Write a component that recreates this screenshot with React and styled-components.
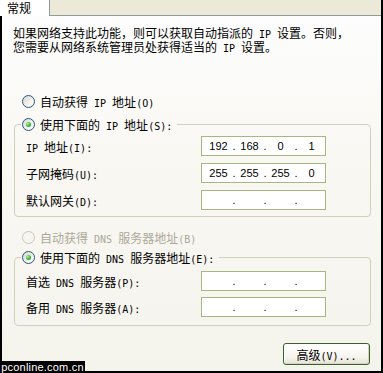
import styled, { createGlobalStyle } from 'styled-components'

const cjk = '"Noto Sans CJK SC", "Noto Sans CJK JP", sans-serif'

const GlobalStyle = createGlobalStyle`
	html, body {
		margin: 0;
		padding: 0;
		background: #fff;
	}
	body {
		font-family: ${cjk};
	}
`

// half-width runs (Latin, digits, brackets) get a narrow mono font like SimSun's
function Mixed({ text }) {
	const parts = text.split(/([\x20-\x7e]+)/)
	return parts.map((p, i) => (i % 2 ? <Half key={i}>{p}</Half> : p))
}

function Radio({ checked, disabled, text }) {
	return (
		<RadioRow $disabled={disabled}>
			<RadioDot $checked={checked} $disabled={disabled} />
			<span>
				<Mixed text={text} />
			</span>
		</RadioRow>
	)
}

function IpField({ value = ['', '', '', ''] }) {
	return (
		<IpBox>
			{value.map((v, i) => (
				<Seg key={i}>
					{i > 0 && <Dot>.</Dot>}
					<Num>{v}</Num>
				</Seg>
			))}
		</IpBox>
	)
}

export default function App() {
	return (
		<>
			<GlobalStyle />
			<Window>
				<TabStrip>
					<Tab>常规</Tab>
					<TabFill />
				</TabStrip>
				<Panel>
					<Desc>
						<Mixed text="如果网络支持此功能，则可以获取自动指派的 IP 设置。否则，" />
						<br />
						<Mixed text="您需要从网络系统管理员处获得适当的 IP 设置。" />
					</Desc>

					<TopRadio>
						<Radio text="自动获得 IP 地址(O)" />
					</TopRadio>

					<Group>
						<Legend>
							<Radio checked text="使用下面的 IP 地址(S):" />
						</Legend>
						<Rows $gap={7}>
							<FieldRow>
								<Label>
									<Mixed text="IP 地址(I):" />
								</Label>
								<IpField value={['192', '168', '0', '1']} />
							</FieldRow>
							<FieldRow>
								<Label>
									<Mixed text="子网掩码(U):" />
								</Label>
								<IpField value={['255', '255', '255', '0']} />
							</FieldRow>
							<FieldRow>
								<Label>
									<Mixed text="默认网关(D):" />
								</Label>
								<IpField />
							</FieldRow>
						</Rows>
					</Group>

					<MidRadio>
						<Radio disabled text="自动获得 DNS 服务器地址(B)" />
					</MidRadio>

					<Group $top={4} $bottom={8} $pad={6}>
						<Legend>
							<Radio checked text="使用下面的 DNS 服务器地址(E):" />
						</Legend>
						<Rows $gap={6}>
							<FieldRow>
								<Label>
									<Mixed text="首选 DNS 服务器(P):" />
								</Label>
								<IpField />
							</FieldRow>
							<FieldRow>
								<Label>
									<Mixed text="备用 DNS 服务器(A):" />
								</Label>
								<IpField />
							</FieldRow>
						</Rows>
					</Group>

					<Footer>
						<Button>
							<span>
								<Mixed text="高级(V)..." />
							</span>
						</Button>
					</Footer>
				</Panel>
				<Watermark>pconline.com.cn</Watermark>
			</Window>
		</>
	)
}

const Window = styled.div`
	position: relative;
	width: 383px;
	height: 373px;
	box-sizing: border-box;
	border-right: 2px solid #000;
	display: flex;
	flex-direction: column;
	overflow: hidden;
	font-family: ${cjk};
	font-size: 12px;
	color: #000;
`

const TabStrip = styled.div`
	display: flex;
	height: 16px;
	flex: none;
`

const Tab = styled.div`
	width: 50px;
	padding-left: 7px;
	box-sizing: border-box;
	background: #fff;
	border-right: 1px solid #919b9c;
	line-height: 15px;
	font-size: 12px;
`

const TabFill = styled.div`
	flex: 1;
	background: #ece9d8;
	border-bottom: 1px solid #919b9c;
`

const Panel = styled.div`
	flex: 1;
	border-left: 2px solid #000;
	border-bottom: 2px solid #000;
	background: linear-gradient(to bottom, #fdfdfd 0%, #f9f8f3 40%, #f4f3ec 100%);
	padding: 11px 10px 0 12px;
	display: flex;
	flex-direction: column;
`

const Half = styled.span`
	font-family: 'DejaVu Sans Mono', 'Liberation Mono', monospace;
	font-size: 10px;
	white-space: pre;
`

const Desc = styled.div`
	margin-left: -1px;
	line-height: 12px;
	white-space: nowrap;
`

const RadioRow = styled.div`
	display: flex;
	align-items: center;
	gap: 5px;
	height: 16px;
	white-space: nowrap;
	color: ${(p) => (p.$disabled ? '#aca899' : '#000')};
`

const RadioDot = styled.span`
	flex: none;
	width: 13px;
	height: 13px;
	box-sizing: border-box;
	border-radius: 50%;
	border: 1px solid ${(p) => (p.$disabled ? '#cac8bb' : '#2b5577')};
	background: ${(p) =>
		p.$disabled ? '#f6f5f0' : 'linear-gradient(135deg, #d8d6cf 0%, #f4f3ef 60%, #ffffff 100%)'};
	display: flex;
	align-items: center;
	justify-content: center;

	&::after {
		content: '';
		display: ${(p) => (p.$checked ? 'block' : 'none')};
		width: 5px;
		height: 5px;
		border-radius: 50%;
		background: radial-gradient(circle at 35% 35%, #b6f0ae 0%, #37b237 55%, #1f8f1f 100%);
	}
`

const TopRadio = styled.div`
	margin: 38px 0 0 8px;
`

const MidRadio = styled.div`
	margin: 12px 0 0 8px;
`

const Group = styled.fieldset`
	margin: ${(p) => p.$top ?? 7}px 0 0 0;
	padding: ${(p) => p.$pad ?? 4}px 0 ${(p) => p.$bottom ?? 6}px 6px;
	border: 1px solid #d0d0bf;
	border-radius: 4px;
	min-width: 0;
`

const Legend = styled.legend`
	padding: 0 5px 0 1px;
	margin: 0;
	height: 16px;
`

const Rows = styled.div`
	display: flex;
	flex-direction: column;
	gap: ${(p) => p.$gap}px;
`

const FieldRow = styled.div`
	display: grid;
	grid-template-columns: 180px 125px;
	align-items: center;
	height: 20px;
`

const Label = styled.div`
	padding-left: 5px;
	white-space: nowrap;
`

const IpBox = styled.div`
	width: 125px;
	height: 20px;
	box-sizing: border-box;
	border: 1px solid #a5b880;
	background: #fff;
	display: flex;
	align-items: center;
	padding-left: 3px;
	font-family: 'Liberation Sans', Arial, sans-serif;
	font-size: 11px;
`

const Seg = styled.div`
	display: flex;
	align-items: center;
`

const Dot = styled.span`
	width: 4px;
	text-align: center;
`

const Num = styled.span`
	width: 27px;
	text-align: center;
`

const Footer = styled.div`
	display: flex;
	justify-content: flex-end;
	margin-top: 17px;
	padding-right: 1px;
`

const Button = styled.div`
	width: 87px;
	height: 22px;
	box-sizing: border-box;
	border: 1px solid #37622a;
	border-radius: 3px;
	background: linear-gradient(to bottom, #ffffff 0%, #f7f6f0 60%, #e6e3d6 100%);
	box-shadow: inset 1px 1px 0 #fff, inset -1px -1px 0 #d8d3c4;
	display: flex;
	align-items: center;
	justify-content: center;
	white-space: nowrap;
`

const Watermark = styled.div`
	position: absolute;
	left: 0;
	bottom: 0;
	width: 85px;
	height: 12px;
	background: #000;
	color: #fff;
	font-family: 'Liberation Sans', Arial, sans-serif;
	font-size: 11px;
	line-height: 12px;
	text-align: center;
	letter-spacing: 0.2px;
`
